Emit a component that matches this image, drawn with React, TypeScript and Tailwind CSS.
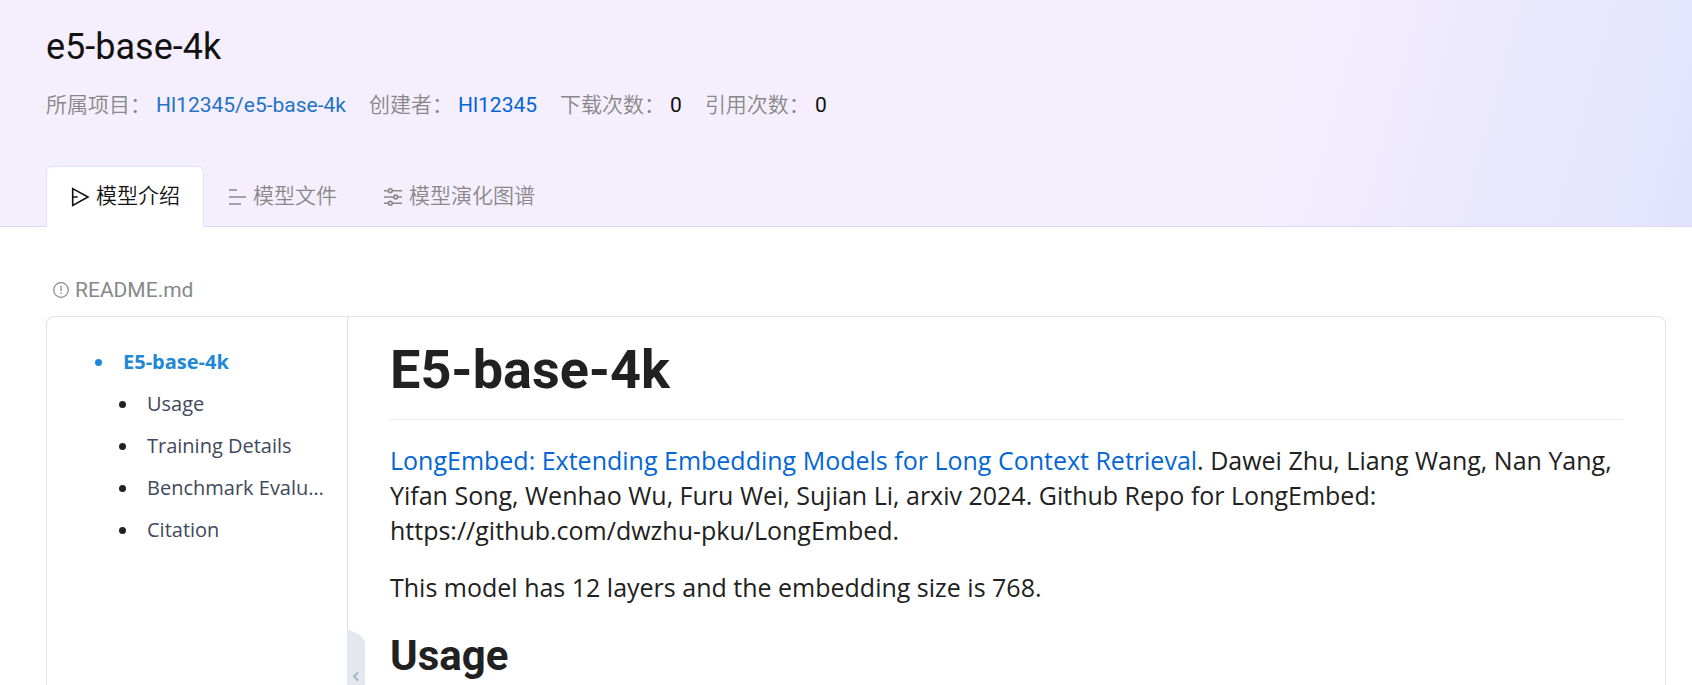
import React from "react";

const details = [
  { label: "所属项目：", value: "Hl12345/e5-base-4k", tone: "text-[#1f74c8]", link: true },
  { label: "创建者：", value: "Hl12345", tone: "text-[#0366d6]", link: true },
  { label: "下载次数：", value: "0", tone: "text-[#111111]", link: false },
  { label: "引用次数：", value: "0", tone: "text-[#111111]", link: false },
];

const sections = ["Usage", "Training Details", "Benchmark Evaluation", "Citation"];

function IntroIcon() {
  return (
    <svg className="size-5" viewBox="0 0 20 20" fill="none" stroke="currentColor" strokeWidth="1.6" aria-hidden="true">
      <path d="M2.700 1.600 18 10 2.700 18.400ZM2.700 10h5" />
    </svg>
  );
}

function FilesIcon() {
  return (
    <svg className="size-5" viewBox="0 0 20 20" fill="none" stroke="currentColor" strokeWidth="1.6" aria-hidden="true">
      <path d="M2 3h8M2 10h17M2 17h12" />
    </svg>
  );
}

function GraphIcon() {
  return (
    <svg className="size-5" viewBox="0 0 20 20" fill="none" stroke="currentColor" strokeWidth="1.6" aria-hidden="true">
      <path d="M1 3.700h4.300M9.300 3.700H19M1 10h9.700M14.700 10H19M1 16.300h4.300M9.300 16.300H19" />
      <circle cx="7.300" cy="3.700" r="1.900" />
      <circle cx="12.700" cy="10" r="1.900" />
      <circle cx="7.300" cy="16.300" r="1.900" />
    </svg>
  );
}

function InfoIcon() {
  return (
    <svg className="size-4" viewBox="0 0 16 16" fill="none" stroke="currentColor" strokeWidth="1.2" aria-hidden="true">
      <circle cx="8" cy="8" r="7.300" />
      <path d="M8 3.800v5.200M8 10.500v1.500" strokeWidth="1.3" />
    </svg>
  );
}

const tabs = [
  { label: "模型介绍", icon: <IntroIcon />, active: true },
  { label: "模型文件", icon: <FilesIcon />, active: false },
  { label: "模型演化图谱", icon: <GraphIcon />, active: false },
];

export default function App() {
  return (
    <div className="flex h-screen flex-col overflow-hidden bg-white font-['Roboto','Noto_Sans_CJK_SC',sans-serif] text-[#212121]">
      <header className="border-b border-[#dadaff] bg-[linear-gradient(105deg,#f5eefd_74%,#e1e3fe_100%)] px-[46px] pt-6">
        <h1 className="text-4xl leading-[46px] text-[#111111]">e5-base-4k</h1>
        <dl className="mt-5 flex text-[21px] leading-[30px]">
          {details.map((item) => (
            <div key={item.label} className="mr-[23px] flex gap-[5px]">
              <dt className="font-[350] text-[#888888]">{item.label}</dt>
              <dd className={item.tone}>{item.link ? <a href="#">{item.value}</a> : item.value}</dd>
            </div>
          ))}
        </dl>
        <nav className="-mb-px mt-[46px] flex" role="tablist">
          {tabs.map((tab) => (
            <button
              key={tab.label}
              type="button"
              role="tab"
              aria-selected={tab.active}
              className={
                tab.active
                  ? "flex h-[61px] items-center gap-1.5 rounded-t-md border border-b-0 border-[#e0e0ff] bg-white px-[23px] text-[21px] font-[350] text-[#111111]"
                  : "flex h-[61px] items-center gap-1.5 px-[23px] text-[21px] font-[350] text-[#888888]"
              }
            >
              {tab.icon}
              {tab.label}
            </button>
          ))}
        </nav>
      </header>

      <main className="flex min-h-0 flex-1 flex-col pl-[46px] pr-[26px] pt-[50px]">
        <div className="flex items-center gap-1.5 pl-[7px] text-[21px] leading-[26px] text-[#888888]">
          <InfoIcon />
          README.md
        </div>
        <div className="mt-[13px] flex min-h-0 flex-1 rounded-t-lg border border-b-0 border-[#e1e3e5]">
          <aside className="relative w-[301px] shrink-0 border-r border-[#dfe2e5] pl-12 pr-4 pt-6 font-['Open_Sans',sans-serif] text-[20px] leading-[42px]">
            <ul>
              <li>
                <a href="#top" className="flex items-center gap-[21px] font-bold text-[#1e87d6]">
                  <span className="size-[7px] shrink-0 rounded-full bg-[#1e87d6]" />
                  E5-base-4k
                </a>
                <ul className="pl-6">
                  {sections.map((name) => (
                    <li key={name} className="flex items-center gap-[21px]">
                      <span className="size-[7px] shrink-0 rounded-full bg-[#212121]" />
                      <a href="#section" className="min-w-0 truncate text-[#40485b]">{name}</a>
                    </li>
                  ))}
                </ul>
              </li>
            </ul>
            <button type="button" aria-label="Collapse outline" className="absolute -right-[18px] bottom-0 h-14 w-[18px] text-[#a9b4c0]">
              <svg className="h-14 w-[18px]" viewBox="0 0 18 56" aria-hidden="true">
                <path d="M0 0 11 5Q18 8.500 18 15V56H0Z" fill="#e2e8ed" />
                <path d="m11 43.500-4 4 4 4" fill="none" stroke="currentColor" strokeWidth="2" />
              </svg>
            </button>
          </aside>
          <article className="min-w-0 flex-1 overflow-hidden px-[42px] pt-5 font-['Open_Sans',sans-serif] text-[25px] leading-[35px]">
            <h2 className="border-b border-[#ececec] pb-4 font-['Roboto',sans-serif] text-[54px] leading-[66px] font-bold">E5-base-4k</h2>
            <p className="mt-[23px]">
              <a href="#paper" className="text-[#0366d6]">LongEmbed: Extending Embedding Models for Long Context Retrieval</a>. Dawei Zhu, Liang Wang, Nan Yang, Yifan Song, Wenhao Wu, Furu Wei, Sujian Li, arxiv 2024. Github Repo for LongEmbed: https://github.com/dwzhu-pku/LongEmbed.
            </p>
            <p className="mt-[22px]">This model has 12 layers and the embedding size is 768.</p>
            <h3 className="mt-[26px] font-['Roboto',sans-serif] text-[42px] leading-[50px] font-bold">Usage</h3>
          </article>
        </div>
      </main>
    </div>
  );
}
